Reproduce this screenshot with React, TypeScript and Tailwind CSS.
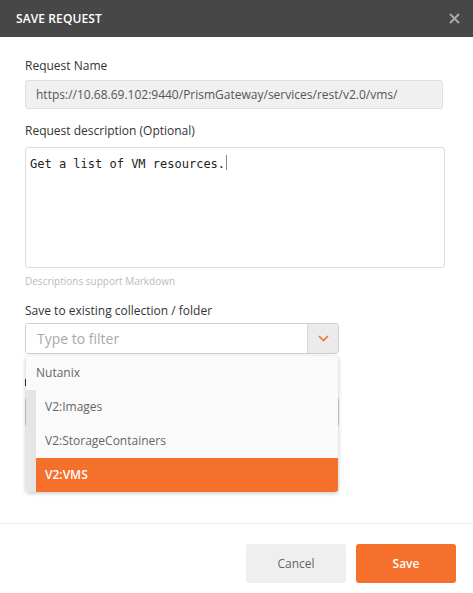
import React from 'react';

const sans = { fontFamily: '"Open Sans", "Liberation Sans", sans-serif' };

export default function App() {
    return (
        <div className="w-[473px] h-[593px] bg-white overflow-hidden flex flex-col" style={sans}>
            {/* Header */}
            <div className="h-[37px] bg-[#474747] flex items-center justify-between pl-4 pr-[12px] shrink-0">
                <span className="text-[12px] font-semibold text-white tracking-[0.1px]">SAVE REQUEST</span>
                <svg width="11" height="11" viewBox="0 0 11 11" className="mr-[1px]">
                    <path d="M1 1 L10 10 M10 1 L1 10" stroke="#a9a9a9" strokeWidth="2" />
                </svg>
            </div>

            {/* Body */}
            <div className="h-[486px] pl-[25px] pr-[28px] pt-[20px] shrink-0 relative">
                <label className="block text-[12px] leading-[17px] text-[#333]">Request Name</label>
                <div className="mt-[6px] h-[29px] bg-[#f0f0f0] border border-[#e0e0e0] rounded-[3px] flex items-center px-[10px] mr-[2px]">
                    <span className="text-[12px] text-[#555]">https://10.68.69.102:9440/PrismGateway/services/rest/v2.0/vms/</span>
                </div>

                <label className="block mt-[13px] text-[12px] leading-[17px] text-[#333]">Request description (Optional)</label>
                <div className="mt-[8px] h-[121px] border border-[#dedede] rounded-[3px] px-[4px] pt-[6px] leading-[16px]">
                    <span className="text-[12px] text-[#222]" style={{ fontFamily: '"DejaVu Sans Mono", "Liberation Mono", monospace' }}>
                        Get a list of VM resources.
                    </span>
                    <span className="inline-block w-[1px] h-[15px] bg-[#888] align-middle ml-[1px] -mt-[2px]" />
                </div>
                <div className="mt-[6px] text-[10px] leading-[14px] text-[#bbb]">Descriptions support Markdown</div>

                <label className="block mt-[14px] text-[12px] leading-[17px] text-[#333]">Save to existing collection / folder</label>
                <div className="mt-[4px] w-[314px] h-[31px] flex border border-[#cfcfcf] rounded-[3px] overflow-hidden">
                    <div className="flex-1 flex items-center px-[11px] bg-white">
                        <span className="text-[14px] text-[#aaa]">Type to filter</span>
                    </div>
                    <div className="w-[31px] bg-[#ebebeb] border-l border-[#d6d6d6] flex items-center justify-center">
                        <svg width="11" height="7" viewBox="0 0 11 7">
                            <path d="M1 1 L5.5 5.5 L10 1" stroke="#f4702b" strokeWidth="1.6" fill="none" />
                        </svg>
                    </div>
                </div>

                {/* Content hidden behind the dropdown */}
                <div className="mt-[25px] h-[7px] w-[2px] bg-[#333]" />
                <div className="mt-[11px] w-[314px] h-[30px] border border-[#cfcfcf] rounded-[3px] bg-white" />

                {/* Dropdown */}
                <div className="absolute left-[26px] top-[319px] w-[312px] bg-[#fafafa] rounded-[3px] shadow-[0_1px_4px_rgba(0,0,0,0.25)] overflow-hidden">
                    <div className="h-[34px] flex items-center pl-[10px] text-[12px] text-[#666]">Nutanix</div>
                    <div className="flex">
                        <div className="w-[10px] bg-[#e5e5e5]" />
                        <div className="flex-1">
                            <div className="h-[34px] flex items-center pl-[9px] text-[12px] text-[#666]">V2:Images</div>
                            <div className="h-[34px] flex items-center pl-[9px] text-[12px] text-[#666]">V2:StorageContainers</div>
                            <div className="h-[34px] flex items-center pl-[9px] text-[12px] font-semibold text-white bg-[#f4702b]">V2:VMS</div>
                        </div>
                    </div>
                </div>
            </div>

            {/* Footer */}
            <div className="border-t border-[#ececec] flex justify-end gap-[10px] pt-[20px] pr-[17px]">
                <button className="w-[100px] h-[39px] rounded-[3px] bg-[#efefef] text-[12px] text-[#666]">Cancel</button>
                <button className="w-[100px] h-[39px] rounded-[3px] bg-[#f4702b] text-[12px] font-semibold text-white">Save</button>
            </div>
        </div>
    );
}
